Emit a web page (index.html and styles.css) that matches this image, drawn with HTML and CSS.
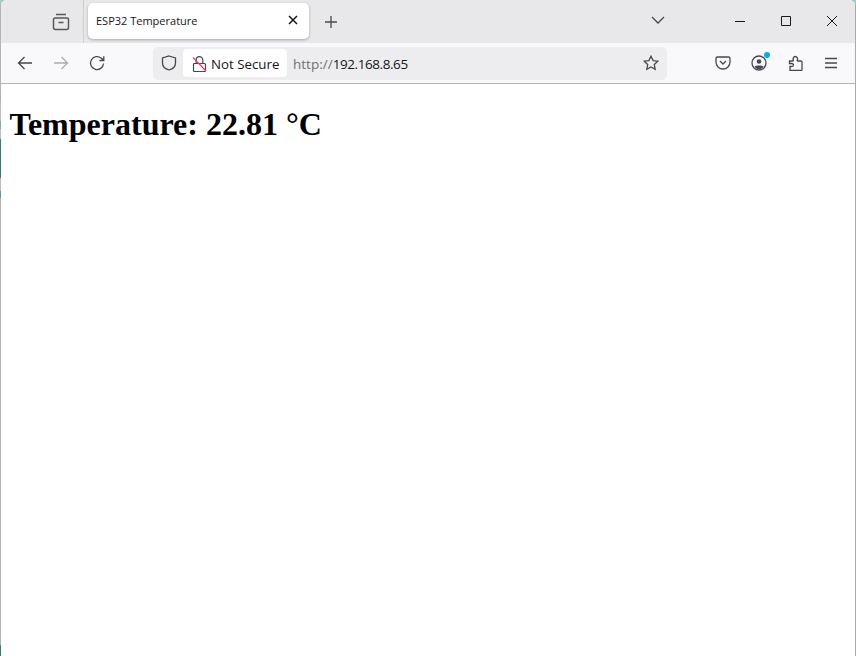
FILE: index.html
```html
<!DOCTYPE html>
<html lang="en">
<head>
<meta charset="utf-8">
<title>ESP32 Temperature</title>
<link rel="stylesheet" href="styles.css">
</head>
<body>
<div class="window">
  <header class="tabbar">
    <div class="tab-side">
      <svg class="view-ico" viewBox="0 0 18 18"><path d="M4 1.500h10M3 5h12a1.500 1.500 0 0 1 1.500 1.500v8a2 2 0 0 1-2 2h-11a2 2 0 0 1-2-2v-8A1.500 1.500 0 0 1 3 5zM6.500 9.500h5"/></svg>
    </div>
    <div class="tab">
      <span class="tab-title">ESP32 Temperature</span>
      <svg class="tab-close" viewBox="0 0 10 10"><path d="M1 1l8 8M9 1l-8 8"/></svg>
    </div>
    <svg class="ico newtab" viewBox="0 0 14 14"><path d="M7 1v12M1 7h12"/></svg>
    <div class="tab-spacer">
      <svg class="chev" viewBox="0 0 14 8"><path d="M1 1l6 6 6-6"/></svg>
    </div>
    <div class="winctl">
      <svg class="ctl" viewBox="0 0 10 10"><path d="M0 5.500h10"/></svg>
      <svg class="ctl" viewBox="0 0 10 10"><path d="M.5.500h9v9h-9z"/></svg>
      <svg class="ctl" viewBox="0 0 10 10"><path d="M0 0l10 10M10 0L0 10"/></svg>
    </div>
  </header>
  <nav class="toolbar">
    <div class="nav-btns">
      <svg class="ico" viewBox="0 0 16 16"><path d="M15 8H1.500M7.500 2l-6 6 6 6"/></svg>
      <svg class="ico dim" viewBox="0 0 16 16"><path d="M1 8h13.500M8.500 2l6 6-6 6"/></svg>
      <svg class="ico" viewBox="0 0 16 16"><path d="M14.500 8.500a6.500 6.500 0 1 1-2.200-5.300L14.500 5M14.800 1.200v4.300h-4.300"/></svg>
    </div>
    <div class="urlbar">
      <svg class="ico shield" viewBox="0 0 16 16"><path d="M8 1l6.500 2v5c0 3.500-3 6-6.500 7-3.500-1-6.500-3.500-6.500-7V3z"/></svg>
      <div class="secure">
        <svg class="lock" viewBox="0 0 15 18"><path d="M4.200 8.500V5a3.300 3.300 0 0 1 6.600 0v3.500M2.500 8.500h10a1 1 0 0 1 1 1v6a1 1 0 0 1-1 1h-10a1 1 0 0 1-1-1v-6a1 1 0 0 1 1-1z"/><path class="lock-slash" d="M1 2.500l13 13.500"/></svg>
        <span class="secure-label">Not Secure</span>
      </div>
      <div class="url"><span class="scheme">http://</span><span class="host">192.168.8.65</span></div>
      <svg class="ico star" viewBox="0 0 16 16"><path d="M8 1.200l2.100 4.400 4.700.6-3.500 3.300.9 4.800L8 12l-4.200 2.300.9-4.800L1.200 6.200l4.700-.6z"/></svg>
    </div>
    <div class="tools">
      <svg class="ico" viewBox="0 0 16 16"><path d="M2.500 2h11A1.500 1.500 0 0 1 15 3.500V7a7 7 0 0 1-14 0V3.500A1.500 1.500 0 0 1 2.500 2zM5 6l3 3 3-3"/></svg>
      <div class="account">
        <svg class="ico" viewBox="0 0 16 16"><circle cx="8" cy="8" r="7"/><circle class="fill" cx="8" cy="6.500" r="2.300"/><path class="fill" d="M3.500 11.500c1-1.500 8-1.500 9 0-1 2-2.500 2.500-4.500 2.500s-3.500-.5-4.500-2.500z"/></svg>
        <span class="dot"></span>
      </div>
      <svg class="ico" viewBox="-1 0 16 16"><path d="M1.500 6h3.300c.5 0 .7-.4.500-.9-.5-1.300 0-3.600 2-3.600s2.500 2.300 2 3.600c-.2.500 0 .9.500.9h3.200a1 1 0 0 1 1 1v7.500a1 1 0 0 1-1 1H2v-4h1.500c1.500 0 2-1 2-1.500S5 8.500 3.500 8.500H1.500z"/></svg>
      <svg class="ico" viewBox="0 0 16 16"><path d="M2 3.500h12M2 8h12M2 12.500h12"/></svg>
    </div>
  </nav>
  <main class="page">
    <h1>Temperature: 22.81 °C</h1>
  </main>
</div>
</body>
</html>
```
FILE: styles.css
```css
* { box-sizing: border-box; }
html, body { margin: 0; height: 100%; }
body { background: #9fc9c9; overflow: hidden; }
.window {
  width: 856px; height: 656px; display: flex; flex-direction: column;
  padding: 0 1px;
  border-radius: 7px 7px 0 0; overflow: hidden;
  background:
    linear-gradient(to bottom, #b4b4b4 0 96px, #b9a9b5 96px 101px, #bdbdbd 101px 121px, #7fa7c0 121px 129px, #bdbdbd 129px 139px, #2f7f7f 139px 178px, #bdbdbd 178px 191px, #6b8fb0 191px 198px, #b4b4b4 198px 645px, #2f7f7f 645px) left top / 1px 100% no-repeat,
    linear-gradient(#a9a9a9, #a9a9a9) right top / 1px 100% no-repeat,
    #fff;
  font-family: "Open Sans", "Noto Sans", sans-serif;
}
svg { display: block; flex: none; fill: none; stroke: #47474f; stroke-width: 1.3; }
.ico { width: 16px; height: 16px; }
.tabbar { height: 43px; flex: none; background: #e8e8eb; display: flex; align-items: center; }
.tab-side { width: 83px; height: 43px; flex: none; border-right: 1px solid #cfcfd2; display: flex; align-items: center; justify-content: flex-end; padding-right: 13px; margin-right: 4px; }
.view-ico { width: 18px; height: 18px; stroke-width: 1.500; stroke: #56565c; }
.tab { width: 221px; height: 36px; margin-top: -2px; background: #fff; border-radius: 5px; box-shadow: 0 1px 3px rgba(0,0,0,.28); display: flex; align-items: center; justify-content: space-between; padding: 0 11px 0 8px; }
.tab-title { font-size: 11px; color: #15141a; }
.tab-close { width: 10px; height: 10px; stroke: #15141a; stroke-width: 1.500; margin-top: -1px; }
.newtab { width: 14px; height: 14px; margin-left: 15px; }
.tab-spacer { flex: 1; display: flex; justify-content: flex-end; padding-right: 70px; }
.chev { width: 14px; height: 8px; margin-top: -3px; }
.winctl { display: flex; gap: 36px; padding-right: 18px; margin-top: -2px; }
.ctl { width: 10px; height: 10px; stroke: #1a1a1a; stroke-width: 1; }
.toolbar { height: 41px; flex: none; background: #f9f9fb; border-bottom: 1px solid #b4b4b7; display: flex; align-items: center; }
.nav-btns { display: flex; gap: 20px; padding-left: 16px; width: 152px; flex: none; }
.dim { opacity: .42; }
.urlbar { width: 514px; height: 33px; flex: none; background: #ededf0; border-radius: 5px; display: flex; align-items: center; padding: 0 8px; }
.shield { margin-right: 6px; }
.secure { height: 28px; width: 104px; flex: none; background: #fff; border-radius: 4px; display: flex; align-items: center; gap: 4px; padding-left: 9px; font-size: 13.300px; color: #15141a; }
.secure-label { padding-top: 1px; }
.lock { width: 15px; height: 18px; stroke-width: 1.200; margin-top: 1px; }
.lock-slash { stroke: #e8406a; }
.url { flex: 1; font-size: 13.500px; color: #15141a; padding: 1px 0 0 6px; }
.scheme { color: #6f6f73; }
.host { letter-spacing: -.42px; }
.tools { display: flex; align-items: center; gap: 20px; padding-left: 48px; }
.account { position: relative; }
.dot { position: absolute; top: -3px; right: -3px; width: 6px; height: 6px; border-radius: 50%; background: #0aa5ff; }
.fill { fill: #47474f; stroke: none; }
.page { flex: 1; padding: 8px 8px 8px 8.500px; background: #fff; }
h1 { margin: 14px 0 0; font-family: "Liberation Serif", serif; font-weight: 700; font-size: 32px; color: #000; line-height: 37px; }
```
